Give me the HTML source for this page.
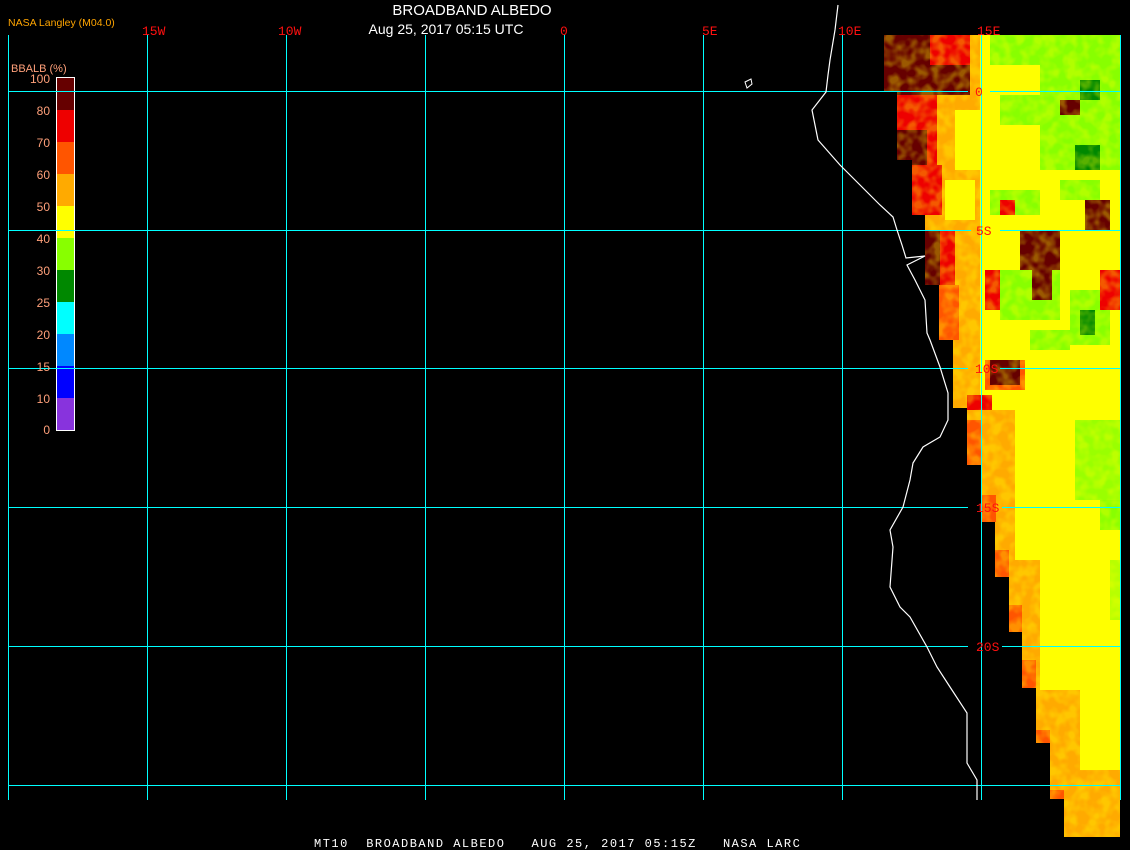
<!DOCTYPE html>
<html><head><meta charset="utf-8"><style>
html,body{margin:0;padding:0;background:#000;}
body{width:1130px;height:850px;overflow:hidden;position:relative;}
svg{position:absolute;left:0;top:0;}
</style></head><body>
<svg width="1130" height="850" viewBox="0 0 1130 850" xmlns="http://www.w3.org/2000/svg">
<defs>
<clipPath id="dc"><polygon points="884,35 1120,35 1120,837 1064,837 1064,799 1050,799 1050,743 1036,743 1036,688 1022,688 1022,632 1009,632 1009,577 995,577 995,522 982,522 982,465 967,465 967,408 953,408 953,340 939,340 939,285 925,285 925,215 912,215 912,160 897,160 897,91 884,91"/></clipPath>
<filter id="mot" x="0" y="0" width="100%" height="100%"><feTurbulence type="fractalNoise" baseFrequency="0.09" numOctaves="2" seed="3"/><feColorMatrix type="matrix" values="0 0 0 0 1  0 0 0 0 1  0 0 0 0 0  0 0 0 -3 1.9"/></filter>
</defs>
<g clip-path="url(#dc)">
<rect x="880" y="30" width="245" height="810" fill="#ffff00"/>
<rect x="880" y="35" width="100" height="380" fill="#ffaa00"/>
<rect x="880" y="35" width="90" height="60" fill="#660000"/>
<rect x="930" y="35" width="40" height="30" fill="#ee0000"/>
<rect x="897" y="95" width="40" height="70" fill="#ee0000"/>
<rect x="897" y="130" width="30" height="35" fill="#660000"/>
<rect x="912" y="165" width="30" height="50" fill="#ee0000"/>
<rect x="925" y="230" width="15" height="55" fill="#660000"/>
<rect x="940" y="230" width="15" height="60" fill="#ee0000"/>
<rect x="939" y="285" width="20" height="55" fill="#ff5500"/>
<rect x="955" y="110" width="25" height="60" fill="#ffff00"/>
<rect x="945" y="180" width="30" height="40" fill="#ffff00"/>
<rect x="953" y="340" width="20" height="70" fill="#ffaa00"/>
<rect x="967" y="395" width="25" height="40" fill="#ee0000"/>
<rect x="985" y="360" width="40" height="30" fill="#ff5500"/>
<rect x="990" y="35" width="130" height="30" fill="#88ff00"/>
<rect x="1040" y="60" width="80" height="110" fill="#88ff00"/>
<rect x="1000" y="95" width="40" height="30" fill="#88ff00"/>
<rect x="1075" y="145" width="25" height="25" fill="#008800"/>
<rect x="1080" y="80" width="20" height="20" fill="#008800"/>
<rect x="990" y="190" width="50" height="25" fill="#88ff00"/>
<rect x="1060" y="180" width="40" height="20" fill="#88ff00"/>
<rect x="1000" y="270" width="60" height="50" fill="#88ff00"/>
<rect x="1070" y="290" width="40" height="55" fill="#88ff00"/>
<rect x="1080" y="310" width="15" height="25" fill="#008800"/>
<rect x="1030" y="330" width="40" height="20" fill="#88ff00"/>
<rect x="1020" y="230" width="40" height="40" fill="#660000"/>
<rect x="1032" y="260" width="20" height="40" fill="#660000"/>
<rect x="1085" y="200" width="25" height="30" fill="#660000"/>
<rect x="1060" y="100" width="20" height="15" fill="#660000"/>
<rect x="1000" y="200" width="15" height="15" fill="#ee0000"/>
<rect x="985" y="270" width="15" height="40" fill="#ee0000"/>
<rect x="1100" y="270" width="20" height="40" fill="#ee0000"/>
<rect x="990" y="360" width="30" height="25" fill="#660000"/>
<rect x="960" y="410" width="55" height="430" fill="#ffaa00"/>
<rect x="1010" y="560" width="30" height="280" fill="#ffaa00"/>
<rect x="1040" y="690" width="40" height="150" fill="#ffaa00"/>
<rect x="1080" y="770" width="40" height="70" fill="#ffaa00"/>
<rect x="967" y="420" width="15" height="45" fill="#ff5500"/>
<rect x="982" y="495" width="14" height="27" fill="#ff5500"/>
<rect x="995" y="550" width="14" height="27" fill="#ff5500"/>
<rect x="1009" y="605" width="13" height="27" fill="#ff5500"/>
<rect x="1022" y="660" width="14" height="28" fill="#ff5500"/>
<rect x="1036" y="730" width="14" height="13" fill="#ff5500"/>
<rect x="1050" y="790" width="14" height="9" fill="#ff5500"/>
<rect x="1075" y="420" width="45" height="80" fill="#88ff00" opacity="0.85"/>
<rect x="1100" y="500" width="20" height="30" fill="#88ff00"/>
<rect x="1110" y="560" width="10" height="60" fill="#88ff00" opacity="0.6"/>
<rect x="880" y="30" width="245" height="810" filter="url(#mot)" opacity="0.35"/>
</g>
<g stroke="#00ffff" stroke-width="1" shape-rendering="crispEdges">
<line x1="8.5" y1="35" x2="8.5" y2="800"/>
<line x1="147.5" y1="35" x2="147.5" y2="800"/>
<line x1="286.5" y1="35" x2="286.5" y2="800"/>
<line x1="425.5" y1="35" x2="425.5" y2="800"/>
<line x1="564.5" y1="35" x2="564.5" y2="800"/>
<line x1="703.5" y1="35" x2="703.5" y2="800"/>
<line x1="842.5" y1="35" x2="842.5" y2="800"/>
<line x1="981.5" y1="35" x2="981.5" y2="800"/>
<line x1="1120.5" y1="35" x2="1120.5" y2="800"/>
<line x1="8" y1="91.5" x2="968" y2="91.5"/><line x1="990" y1="91.5" x2="1121" y2="91.5"/>
<line x1="8" y1="230.5" x2="971" y2="230.5"/><line x1="1000" y1="230.5" x2="1121" y2="230.5"/>
<line x1="8" y1="368.5" x2="968" y2="368.5"/><line x1="1000" y1="368.5" x2="1121" y2="368.5"/>
<line x1="8" y1="507.5" x2="968" y2="507.5"/><line x1="1002" y1="507.5" x2="1121" y2="507.5"/>
<line x1="8" y1="646.5" x2="968" y2="646.5"/><line x1="1002" y1="646.5" x2="1121" y2="646.5"/>
<line x1="8" y1="785.5" x2="1121" y2="785.5"/>
</g>
<polyline fill="none" stroke="#fff" stroke-width="1.2" points="838,5 835,30 830,60 828,75 826,92 812,110 818,140 840,165 860,185 880,205 893,217 897,230 902,245 906,258 925,256 907,265 915,280 925,300 927,333 930,340 940,367 948,393 948,420 940,437 923,447 913,463 910,480 903,507 890,530 893,547 890,587 900,607 910,617 927,647 937,667 950,687 967,713 967,730 967,763 977,780 977,800"/>
<polygon points="745,82 751,79 752,84 747,88" fill="none" stroke="#fff" stroke-width="1"/>
<g font-family="Liberation Mono, monospace" font-size="13" fill="#ff1010">
<text x="142" y="35">15W</text>
<text x="278" y="35">10W</text>
<text x="560" y="35">0</text>
<text x="702" y="35">5E</text>
<text x="838" y="35">10E</text>
<text x="977" y="35">15E</text>
<text x="975" y="96">0</text>
<text x="976" y="235">5S</text>
<text x="975" y="373">10S</text>
<text x="976" y="512">15S</text>
<text x="976" y="651">20S</text>
</g>
<text x="472" y="15" text-anchor="middle" font-family="Liberation Sans, sans-serif" font-size="15" fill="#fff">BROADBAND ALBEDO</text>
<text x="446" y="34" text-anchor="middle" font-family="Liberation Sans, sans-serif" font-size="14" fill="#fff">Aug 25, 2017 05:15 UTC</text>
<text x="8" y="26" font-family="Liberation Sans, sans-serif" font-size="10.5" fill="#ffa500">NASA Langley (M04.0)</text>
<text x="11" y="72" font-family="Liberation Sans, sans-serif" font-size="11" fill="#ffa07a">BBALB (%)</text>
<g shape-rendering="crispEdges">
<rect x="57" y="78" width="17" height="32" fill="#660000"/>
<rect x="57" y="110" width="17" height="32" fill="#ee0000"/>
<rect x="57" y="142" width="17" height="32" fill="#ff5500"/>
<rect x="57" y="174" width="17" height="32" fill="#ffaa00"/>
<rect x="57" y="206" width="17" height="32" fill="#ffff00"/>
<rect x="57" y="238" width="17" height="32" fill="#88ff00"/>
<rect x="57" y="270" width="17" height="32" fill="#008800"/>
<rect x="57" y="302" width="17" height="32" fill="#00ffff"/>
<rect x="57" y="334" width="17" height="32" fill="#0088ff"/>
<rect x="57" y="366" width="17" height="32" fill="#0000ff"/>
<rect x="57" y="398" width="17" height="32" fill="#8833dd"/>
<rect x="56.5" y="77.5" width="18" height="353" fill="none" stroke="#fff"/>
<line x1="8" y1="91.5" x2="75" y2="91.5" stroke="#00ffff"/>
<line x1="8" y1="230.5" x2="75" y2="230.5" stroke="#00ffff"/>
<line x1="8" y1="368.5" x2="75" y2="368.5" stroke="#00ffff"/>
</g>
<g font-family="Liberation Sans, sans-serif" font-size="12" fill="#ffa07a" text-anchor="end">
<text x="50" y="83">100</text>
<text x="50" y="115">80</text>
<text x="50" y="147">70</text>
<text x="50" y="179">60</text>
<text x="50" y="211">50</text>
<text x="50" y="243">40</text>
<text x="50" y="275">30</text>
<text x="50" y="307">25</text>
<text x="50" y="339">20</text>
<text x="50" y="371">15</text>
<text x="50" y="403">10</text>
<text x="50" y="434">0</text>
</g>
<text x="314" y="847" font-family="Liberation Mono, monospace" font-size="12" letter-spacing="1.5" fill="#fff" xml:space="preserve">MT10  BROADBAND ALBEDO   AUG 25, 2017 05:15Z   NASA LARC</text>
</svg>
</body></html>
